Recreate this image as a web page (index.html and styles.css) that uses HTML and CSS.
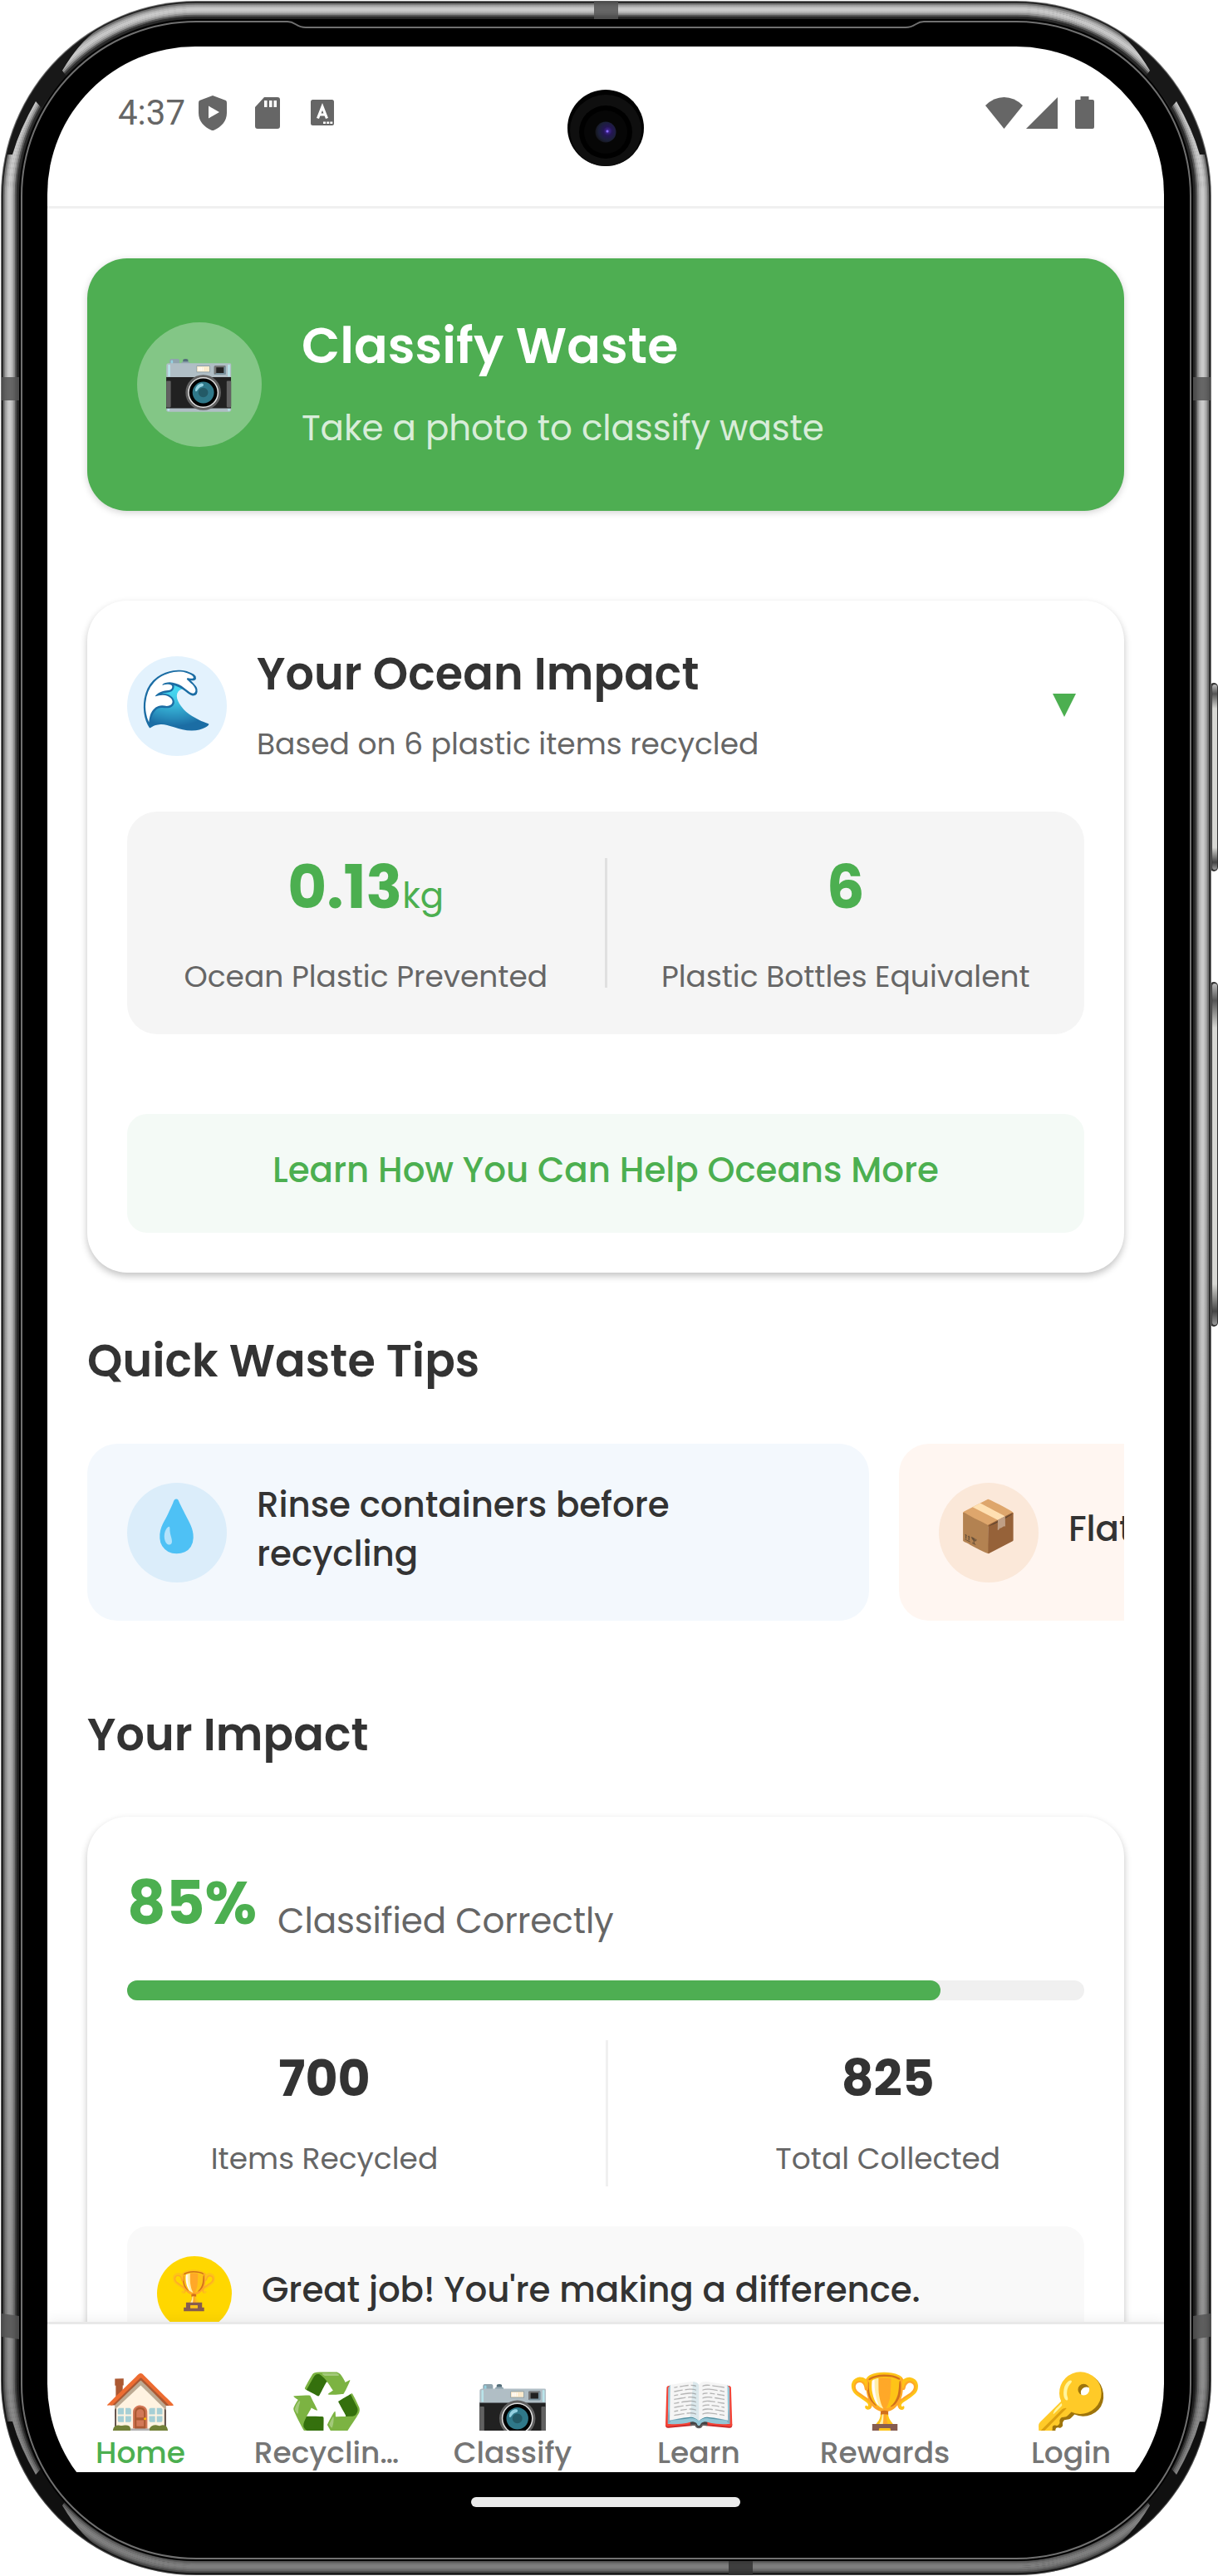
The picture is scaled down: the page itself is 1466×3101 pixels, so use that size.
FILE: index.html
```html
<!DOCTYPE html>
<html lang="en">
<head>
<meta charset="utf-8">
<title>Waste Classifier</title>
<link rel="stylesheet" href="styles.css">
</head>
<body>
<div class="phone">
  <svg class="frame" viewBox="0 0 1466 3101" aria-hidden="true">
    <defs>
      <linearGradient id="shade" x1="0" y1="0" x2="0" y2="1">
        <stop offset="0" stop-color="#000" stop-opacity=".04"/>
        <stop offset=".45" stop-color="#000" stop-opacity=".04"/>
        <stop offset=".8" stop-color="#000" stop-opacity=".22"/>
        <stop offset="1" stop-color="#000" stop-opacity=".4"/>
      </linearGradient>
      <linearGradient id="key" x1="0" y1="0" x2="0" y2="1">
        <stop offset="0" stop-color="#bbb"/><stop offset=".05" stop-color="#555"/><stop offset=".13" stop-color="#d8d8d4"/>
        <stop offset=".88" stop-color="#d8d8d4"/><stop offset=".96" stop-color="#444"/><stop offset="1" stop-color="#999"/>
      </linearGradient>
      <path id="corner" d="M118 35Q95 51 75 85L81 93Q60 112 50 130L43 122Q24 155 15 186L8.400 186A233 233 0 0 1 118 35Z"/>
    </defs>
    <rect x="1456" y="822" width="10" height="227" rx="5" fill="#333"/>
    <rect x="1459" y="824" width="6" height="223" rx="3" fill="url(#key)"/>
    <rect x="1456" y="1182" width="10" height="415" rx="5" fill="#333"/>
    <rect x="1459" y="1184" width="6" height="411" rx="3" fill="url(#key)"/>
    <rect x="1" y="1" width="1457" height="3099" rx="235" fill="#7a7a7a"/>
    <rect x="2" y="2" width="1455" height="3097" rx="234" fill="#222"/>
    <g fill="none" stroke-width="2.4">
      <rect x="5" y="5" width="1449" height="3091" rx="231" stroke="#777"/>
      <rect x="7" y="7" width="1445" height="3087" rx="229" stroke="#a4a4a4"/>
      <rect x="9" y="9" width="1441" height="3083" rx="227" stroke="#c2c2c2"/>
      <rect x="11" y="11" width="1437" height="3079" rx="225" stroke="#d2d2d2"/>
      <rect x="13" y="13" width="1433" height="3075" rx="223" stroke="#cfcfcf"/>
      <rect x="15" y="15" width="1429" height="3071" rx="221" stroke="#bcbcbc"/>
      <rect x="17" y="17" width="1425" height="3067" rx="219" stroke="#989898"/>
      <rect x="19" y="19" width="1421" height="3063" rx="217" stroke="#5c5c5c"/>
      <rect x="21" y="21" width="1417" height="3059" rx="215" stroke="#2c2c2c"/>
    </g>
    <g fill="#191919">
      <use href="#corner"/>
      <use href="#corner" transform="translate(1459 0) scale(-1 1)"/>
      <use href="#corner" transform="translate(0 3101) scale(1 -1)"/>
      <use href="#corner" transform="translate(1459 3101) scale(-1 -1)"/>
    </g>
    <rect x="1" y="1" width="1457" height="3099" rx="235" fill="url(#shade)"/>
    <g fill="#555" fill-opacity=".85">
      <path d="M2 454h21v28H2zM1436 454h21v28h-21zM2 2785l21 3v28l-21-3zM1457 2785l-21 3v28l21-3zM715 1h29v22h-29z"/>
      <path d="M877 3083h29v17h-29z" fill="#333"/>
    </g>
    <rect x="23" y="23" width="1413" height="3060" rx="213" fill="#000"/>
    <path fill="none" stroke="#707070" stroke-width="2" d="M236 26H346C356 26 356 33 368 33H1090C1102 33 1102 26 1112 26H1223A210 210 0 0 1 1433 236V2870A210 210 0 0 1 1223 3080H236A210 210 0 0 1 26 2870V236A210 210 0 0 1 236 26Z"/>
  </svg>

  <div class="screen">
    <header class="status">
      <div class="status-group">
        <span class="clock">4:37</span>
        <svg class="shield" viewBox="0 0 34 42"><path fill-rule="evenodd" d="M17 0 33 6Q34 7 34 9V21C34 31 27 38 19 41.500Q17 42.500 15 41.500C7 38 0 31 0 21V9Q0 7 1 6ZM12 12.500V27.500L25 20Z"/></svg>
        <svg class="sdcard" viewBox="0 0 30 38"><path fill-rule="evenodd" d="M11 0H27Q30 0 30 3V35Q30 38 27 38H3Q0 38 0 35V12ZM11 4V12H14.500V4ZM17 4V12H20.500V4ZM22.500 4V12H26V4Z"/></svg>
        <svg class="alpha" viewBox="0 0 28 31"><rect width="28" height="31" rx="2.500"/><path d="M8.500 22.500 14 8.500 19.500 22.500M10.500 18H17.500" fill="none" stroke="#fff" stroke-width="3.200"/><path d="M15 26.500h3v2.500h-3zM19.200 26.500h3v2.500h-3zM23.300 26.500h3v2.500h-3z" fill="#fff"/></svg>
      </div>
      <div class="status-group">
        <svg class="wifi" viewBox="0 0 45 38"><path d="M22.500 38 0 10Q10 0 22.500 0T45 10Z"/></svg>
        <svg class="signal" viewBox="0 0 38 38"><path d="M38 0V38H0Z"/></svg>
        <svg class="battery" viewBox="0 0 23 39"><path d="M6.500 0H16.500V4H21Q23 4 23 6V37Q23 39 21 39H2Q0 39 0 37V6Q0 4 2 4H6.500Z"/></svg>
      </div>
      <svg class="camera" viewBox="0 0 92 92">
        <defs><radialGradient id="lens" cx=".6" cy=".45" r=".6"><stop offset="0" stop-color="#4a2aa8"/><stop offset=".35" stop-color="#241654"/><stop offset=".75" stop-color="#1b2038"/><stop offset="1" stop-color="#15151c"/></radialGradient></defs>
        <circle cx="46" cy="46" r="46" fill="#020202"/><circle cx="46" cy="49" r="43" fill="#0f0f0f"/><circle cx="46" cy="51" r="32" fill="#000"/><circle cx="46" cy="51" r="26" fill="#060606"/>
        <circle cx="46" cy="51" r="12.500" fill="url(#lens)"/><circle cx="48" cy="50" r="1.500" fill="#8a6cff"/>
      </svg>
    </header>

    <main class="content">
      <section class="classify">
        <div class="classify-icon emoji">📷</div>
        <div class="classify-text">
          <h1>Classify Waste</h1>
          <p>Take a photo to classify waste</p>
        </div>
      </section>

      <section class="card ocean">
        <div class="ocean-head">
          <div class="round round-blue emoji">🌊</div>
          <div class="ocean-title">
            <h2>Your Ocean Impact</h2>
            <p class="small">Based on 6 plastic items recycled</p>
          </div>
          <svg class="caret" viewBox="0 0 28 28"><path d="M0 0H28L14 28Z"/></svg>
        </div>
        <div class="ocean-stats">
          <div class="ocean-stat">
            <div class="figure">0.13<span>kg</span></div>
            <div class="small">Ocean Plastic Prevented</div>
          </div>
          <div class="ocean-rule"></div>
          <div class="ocean-stat">
            <div class="figure">6</div>
            <div class="small">Plastic Bottles Equivalent</div>
          </div>
        </div>
        <div class="learn">Learn How You Can Help Oceans More</div>
      </section>

      <h2 class="tips-heading">Quick Waste Tips</h2>
      <div class="tips">
        <div class="tip tip-blue">
          <div class="round tip-icon emoji">💧</div>
          <p>Rinse containers before<br>recycling</p>
        </div>
        <div class="tip tip-orange">
          <div class="round tip-icon emoji">📦</div>
          <p>Flatten</p>
        </div>
      </div>

      <h2 class="impact-heading">Your Impact</h2>
      <section class="card impact">
        <div class="score">
          <div class="figure">85%</div>
          <p>Classified Correctly</p>
        </div>
        <div class="bar"><div class="bar-fill" style="width:85%"></div></div>
        <div class="totals">
          <div class="total"><strong>700</strong><span class="small">Items Recycled</span></div>
          <div class="totals-rule"></div>
          <div class="total"><strong>825</strong><span class="small">Total Collected</span></div>
        </div>
        <div class="praise">
          <div class="medal emoji">🏆</div>
          <p>Great job! You're making a difference.</p>
        </div>
      </section>
    </main>

    <nav class="tabs">
      <div class="tab tab-active"><span class="tab-icon emoji">🏠</span><span>Home</span></div>
      <div class="tab"><span class="tab-icon emoji">♻️</span><span>Recyclin…</span></div>
      <div class="tab"><span class="tab-icon emoji">📷</span><span>Classify</span></div>
      <div class="tab"><span class="tab-icon emoji">📖</span><span>Learn</span></div>
      <div class="tab"><span class="tab-icon emoji">🏆</span><span>Rewards</span></div>
      <div class="tab"><span class="tab-icon emoji">🔑</span><span>Login</span></div>
    </nav>
    <div class="gesture"><div class="gesture-pill"></div></div>
  </div>
</div>
</body>
</html>
```
FILE: styles.css
```css
* { box-sizing: border-box; margin: 0; padding: 0; }

body {
  background: #fff;
  color: #333;
  font-family: Poppins, Inter, sans-serif;
}

h1, h2 { font-weight: 600; }
h2 { font-size: 54px; line-height: 81px; letter-spacing: .1px; }

.emoji {
  font-family: "Noto Color Emoji", sans-serif;
  display: flex;
  justify-content: center;
  align-items: center;
}

.small { font-size: 36px; line-height: 54px; color: #666; }
.figure { height: 108px; font-size: 72px; line-height: 108px; font-weight: 700; color: #4caf50; }

/* device */
.phone {
  position: relative;
  width: 1466px;
  height: 3101px;
  padding: 56px 65px 53px 57px;
}
.frame { position: absolute; inset: 0; width: 1466px; height: 3101px; }
.screen {
  position: relative;
  display: flex;
  flex-direction: column;
  width: 1344px;
  height: 2992px;
  border-radius: 178px;
  overflow: hidden;
  background: #000;
}

/* status bar */
.status {
  position: relative;
  display: flex;
  justify-content: space-between;
  height: 195px;
  padding: 59px 84px 0 85px;
  background: #fff;
  border-bottom: 3px solid #f0f0f0;
  fill: #666;
}
.status-group { display: flex; align-items: center; height: 41px; }
.clock { font: 400 42px/41px Roboto, sans-serif; color: #666; width: 82px; }
.shield { width: 34px; height: 42px; margin-left: 15px; }
.sdcard { width: 30px; height: 38px; margin-left: 34px; }
.alpha { width: 28px; height: 31px; margin-left: 37px; }
.wifi { width: 45px; height: 38px; }
.signal { width: 38px; height: 38px; margin-left: 4px; }
.battery { width: 23px; height: 39px; margin-left: 21px; }
.camera { position: absolute; left: 626px; top: 52px; width: 92px; height: 92px; }

/* scrolling content */
.content {
  height: 2544px;
  padding: 60px 48px 0;
  background: #fff;
  overflow: hidden;
}

.classify {
  display: flex;
  align-items: center;
  gap: 48px;
  height: 304px;
  padding: 0 60px;
  border-radius: 48px;
  background: #4eae52;
  color: #fff;
  box-shadow: 0 2px 9px rgba(0, 0, 0, .18);
}
.classify-icon {
  width: 150px;
  height: 150px;
  border-radius: 50%;
  background: rgba(255, 255, 255, .3);
  font-size: 71px;
  padding-bottom: 13px;
}
.classify-text { padding-bottom: 8px; }
.classify-text h1 { font-size: 60px; line-height: 90px; letter-spacing: .1px; }
.classify-text p { margin-top: 23px; font-size: 42px; line-height: 63px; letter-spacing: -.1px; color: rgba(255, 255, 255, .8); }

.card {
  padding: 48px;
  border-radius: 48px;
  background: #fff;
  box-shadow: 0 4px 9px rgba(0, 0, 0, .24);
}
.round { flex: none; width: 120px; height: 120px; border-radius: 50%; }
.round-blue { background: #e3f2fd; font-size: 71px; padding-bottom: 16px; }

.ocean { margin-top: 108px; height: 809px; }
.ocean-head { display: flex; height: 158px; gap: 36px; align-items: center; }
.ocean-title { flex: 1; height: 158px; }
.ocean-title p { margin-top: 17px; }
.caret { width: 28px; height: 28px; margin: 0 10px 2px 0; fill: #4caf50; }

.ocean-stats {
  display: flex;
  align-items: center;
  height: 268px;
  margin-top: 48px;
  border-radius: 36px;
  background: #f5f5f5;
}
.ocean-stat { flex: 1; height: 194px; text-align: center; }
.ocean-stat .small { margin-top: 27px; }
.ocean-stat .figure span { font-size: 42px; font-weight: 400; }
.ocean-rule { width: 3px; height: 156px; background: #e0e0e0; }

.learn {
  height: 143px;
  margin-top: 96px;
  border-radius: 24px;
  background: #f4faf6;
  color: #4caf50;
  font-size: 42px;
  font-weight: 500;
  line-height: 136px;
  letter-spacing: -.06px;
  text-align: center;
}

.tips-heading { margin-top: 66px; }
.tips { display: flex; gap: 36px; margin-top: 59px; overflow: hidden; }
.tip {
  display: flex;
  flex: none;
  align-items: center;
  gap: 36px;
  width: 941px;
  height: 213px;
  padding: 0 48px;
  border-radius: 36px;
}
.tip p { padding-bottom: 6px; font-size: 42px; font-weight: 500; line-height: 58.8px; letter-spacing: -.08px; }
.tip-blue { background: #f3f8fd; }
.tip-orange { background: #fff6f1; }
.tip-icon { font-size: 60px; padding-bottom: 14px; }
.tip-blue .tip-icon { background: #dbedfa; }
.tip-orange .tip-icon { background: #fbe8d9; }

.impact-heading { margin-top: 97px; }
.impact { margin-top: 58px; padding-top: 49px; height: 700px; }
.score { display: flex; align-items: flex-end; gap: 25px; height: 109px; }
.score p { padding-bottom: 1px; font-size: 42px; line-height: 63px; letter-spacing: -.1px; color: #666; }
.bar { height: 24px; margin-top: 39px; border-radius: 12px; background: #f0f0f0; }
.bar-fill { height: 24px; border-radius: 12px; background: #4eae52; }
.totals { display: flex; justify-content: space-around; height: 176px; margin-top: 48px; }
.total { display: flex; flex-direction: column; align-items: center; gap: 25px; padding-top: 1px; }
.total strong { font-size: 60px; line-height: 90px; font-weight: 700; }
.totals-rule { width: 3px; background: #f0f0f0; }
.praise {
  display: flex;
  gap: 36px;
  height: 162px;
  margin-top: 48px;
  padding: 36px;
  border-radius: 24px;
  background: #f9f9f9;
}
.praise p { padding-top: 9px; font-size: 42px; line-height: 63px; font-weight: 500; letter-spacing: -.1px; }
.medal { width: 90px; height: 90px; border-radius: 50%; background: #ffd700; font-size: 46px; padding-bottom: 9px; }

/* bottom tabs */
.tabs {
  position: relative;
  display: grid;
  grid-template-columns: repeat(6, 1fr);
  height: 181px;
  padding-top: 56px;
  border-top: 3px solid #e8e8e8;
  background: #fff;
  box-shadow: 0 -4px 14px rgba(0, 0, 0, .05);
}
.tab {
  display: flex;
  flex-direction: column;
  align-items: center;
  height: 126px;
  font-size: 36px;
  font-weight: 500;
  line-height: 54px;
  color: #757575;
}
.tab-active { color: #4caf50; }
.tab-icon {
  flex: none;
  width: 100px;
  height: 72px;
  padding-left: 2px;
  font-size: 72.5px;
  line-height: 84px;
  align-items: flex-start;
  overflow: hidden;
}

.gesture { flex: 1; padding-top: 30px; }
.gesture-pill { width: 324px; height: 12px; margin: 0 auto; border-radius: 6px; background: #ebebeb; }
```
